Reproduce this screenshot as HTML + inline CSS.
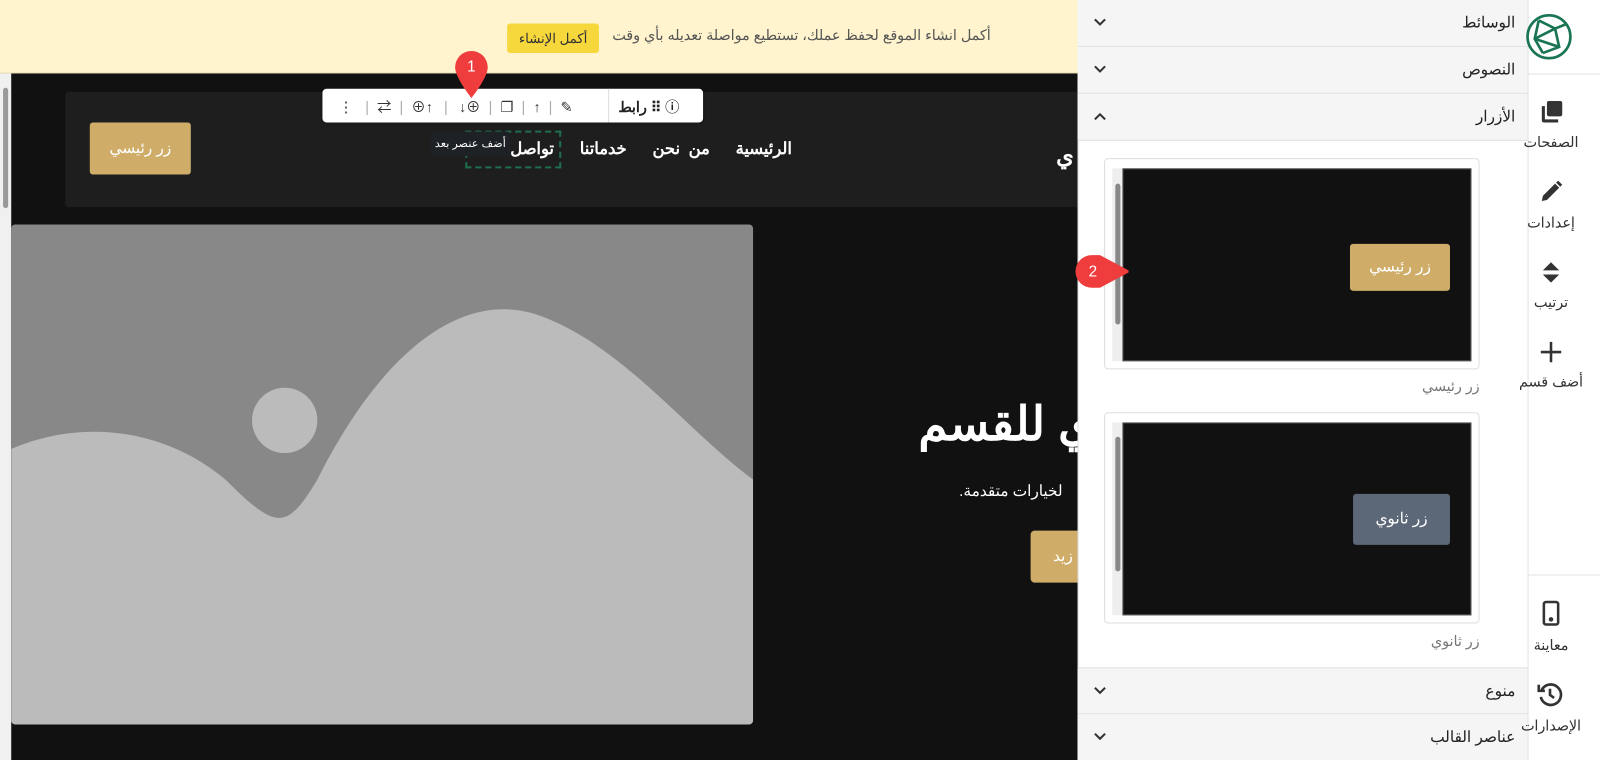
<!DOCTYPE html>
<html><head><meta charset="utf-8"><style>
*{margin:0;padding:0;box-sizing:border-box}
body{width:1600px;height:760px;overflow:hidden;background:#fff;font-family:"Liberation Sans","Noto Sans CJK SC",sans-serif;position:relative}
#w{position:absolute;left:0;top:0;width:1568px;height:745px;transform:scale(1.0204);transform-origin:0 0;overflow:hidden}
.a{position:absolute}
.ar{direction:rtl}
.row{position:absolute;left:1056px;width:441px;height:46px;background:#f5f5f5;border-bottom:1px solid #e2e2e2;font-size:15px;color:#222}
.row span{position:absolute;right:12px;top:13px}
.row svg{position:absolute;left:16px;top:18px}
.lbl{position:absolute;font-size:14px;color:#333;text-align:center;width:100px;left:1470px;direction:rtl}
</style></head><body><div id="w">
<div class="a" style="left:0;top:0;width:1056px;height:72px;background:#fff4ce;border-bottom:1px solid #eadfb5"></div>
<div class="a ar" style="left:600px;top:26px;font-size:14px;color:#555">أكمل انشاء الموقع لحفظ عملك، تستطيع مواصلة تعديله بأي وقت</div>
<div class="a ar" style="left:497px;top:23px;width:90px;height:29px;background:#f7d83c;border-radius:3px;font-size:13px;color:#333;text-align:center;line-height:29px">أكمل الإنشاء</div>
<div class="a" style="left:0;top:72px;width:1056px;height:688px;background:#111"></div>
<div class="a" style="left:0;top:72px;width:11px;height:688px;background:#f0f0f0"></div>
<div class="a" style="left:3px;top:86px;width:5px;height:118px;background:#999;border-radius:3px"></div>
<div class="a" style="left:64px;top:90px;width:992px;height:113px;background:#1e1e1e;border-radius:3px 0 0 3px"></div>
<div class="a ar" style="left:88px;top:120px;width:99px;height:51px;background:#cfad69;border-radius:3px;color:#fff;font-size:15px;text-align:center;line-height:51px">زر رئيسي</div>
<div class="a ar" style="left:500px;top:136px;font-size:16px;font-weight:bold;color:#fff;white-space:nowrap;word-spacing:4px">الرئيسية&nbsp;&nbsp;&nbsp;من نحن&nbsp;&nbsp;&nbsp;خدماتنا&nbsp;&nbsp;&nbsp;تواصل</div>
<div class="a" style="left:456px;top:128px;width:94px;height:37px;border:2px dashed #1f6f4e"></div>
<div class="a ar" style="left:422px;top:129px;width:78px;height:24px;background:#1e2227;color:#fff;font-size:11px;text-align:center;line-height:24px;border-radius:3px">أضف عنصر بعد</div>
<div class="a ar" style="left:1035px;top:140px;font-size:22px;font-weight:bold;color:#fff">ي</div>
<div class="a" style="left:316px;top:87px;width:373px;height:33px;background:#fff;border-radius:4px;box-shadow:0 1px 3px rgba(0,0,0,.3)"></div>
<div class="a" style="left:596px;top:87px;width:1px;height:33px;background:#ddd"></div>
<div class="a" style="left:332px;top:95px;font-size:14px;color:#333;white-space:nowrap">⋮ <span style="color:#aaa;margin:0 8px">|</span>⇄<span style="color:#aaa;margin:0 8px">|</span>⊕↑<span style="color:#aaa;margin:0 11px">|</span>↓⊕<span style="color:#aaa;margin:0 8px">|</span>❐<span style="color:#aaa;margin:0 8px">|</span>↑<span style="color:#aaa;margin:0 8px">|</span>✎</div>
<div class="a ar" style="left:606px;top:95px;font-size:14px;color:#222;font-weight:bold">⠿ ⓘ رابط</div>
<svg class="a" style="left:444px;top:48px" width="36" height="50"><path d="M18 2a16 16 0 0 1 16 16c0 10-16 30-16 30S2 28 2 18A16 16 0 0 1 18 2z" fill="#ef3d3d"/><text x="18" y="22" fill="#fff" font-size="15" font-family="Liberation Sans" text-anchor="middle">1</text></svg>
<div class="a" style="left:11px;top:220px;width:727px;height:490px;background:#888;border-radius:4px;overflow:hidden">
<svg width="727" height="490"><path d="M0 220 C70 190 150 200 210 250 C260 300 270 300 300 250 C360 130 440 60 520 90 C600 120 660 200 727 250 L727 490 L0 490Z" fill="#bbb"/><circle cx="268" cy="192" r="32" fill="#bbb"/></svg></div>
<div class="a ar" style="left:900px;top:388px;font-size:46px;font-weight:bold;color:#fff;white-space:nowrap">ي للقسم</div>
<div class="a ar" style="left:940px;top:472px;font-size:15px;color:#fff;white-space:nowrap">لخيارات متقدمة.</div>
<div class="a" style="left:1010px;top:520px;width:46px;height:51px;background:#cfad69;border-radius:4px 0 0 4px;color:#fff;font-size:15px;line-height:51px;padding-left:22px">زيد</div>
<div class="a" style="left:1056px;top:0;width:1px;height:760px;background:#ddd"></div>
<div class="row ar" style="top:0"><span>الوسائط</span><svg width="12" height="8"><path d="M1 1l5 5 5-5" stroke="#333" stroke-width="2" fill="none"/></svg></div>
<div class="row ar" style="top:46px"><span>النصوص</span><svg width="12" height="8"><path d="M1 1l5 5 5-5" stroke="#333" stroke-width="2" fill="none"/></svg></div>
<div class="row ar" style="top:92px"><span>الأزرار</span><svg width="12" height="8"><path d="M1 7l5-5 5 5" stroke="#333" stroke-width="2" fill="none"/></svg></div>
<div class="row ar" style="top:654px;border-top:1px solid #e2e2e2"><span>منوع</span><svg width="12" height="8"><path d="M1 1l5 5 5-5" stroke="#333" stroke-width="2" fill="none"/></svg></div>
<div class="row ar" style="top:700px;height:60px"><span>عناصر القالب</span><svg width="12" height="8"><path d="M1 1l5 5 5-5" stroke="#333" stroke-width="2" fill="none"/></svg></div>
<div class="a" style="left:1082px;top:155px;width:368px;height:207px;border:1px solid #ddd;border-radius:4px"></div>
<div class="a" style="left:1090px;top:165px;width:10px;height:189px;background:#eee"></div>
<div class="a" style="left:1093px;top:180px;width:5px;height:138px;background:#888;border-radius:3px"></div>
<div class="a" style="left:1100px;top:165px;width:342px;height:189px;background:#111;border:1px solid #555"></div>
<div class="a ar" style="left:1323px;top:239px;width:98px;height:46px;background:#cfad69;border-radius:3px;color:#fff;font-size:15px;text-align:center;line-height:46px">زر رئيسي</div>
<div class="a ar" style="left:1300px;top:370px;width:150px;font-size:14px;color:#777">زر رئيسي</div>
<div class="a" style="left:1082px;top:404px;width:368px;height:207px;border:1px solid #ddd;border-radius:4px"></div>
<div class="a" style="left:1090px;top:414px;width:10px;height:189px;background:#eee"></div>
<div class="a" style="left:1093px;top:428px;width:5px;height:132px;background:#888;border-radius:3px"></div>
<div class="a" style="left:1100px;top:414px;width:342px;height:189px;background:#111;border:1px solid #555"></div>
<div class="a ar" style="left:1326px;top:484px;width:95px;height:50px;background:#5c6778;border-radius:3px;color:#fff;font-size:15px;text-align:center;line-height:50px">زر ثانوي</div>
<div class="a ar" style="left:1300px;top:620px;width:150px;font-size:14px;color:#777">زر ثانوي</div>
<svg class="a" style="left:1052px;top:248px" width="54" height="36"><path d="M18 2h8l30 16-30 16h-8a16 16 0 0 1 0-32z" fill="#ef3d3d"/><text x="19" y="23" fill="#fff" font-size="15" font-family="Liberation Sans" text-anchor="middle">2</text></svg>
<div class="a" style="left:1497px;top:0;width:1px;height:760px;background:#e2e2e2"></div>
<div class="a" style="left:1497px;top:72px;width:103px;height:1px;background:#e2e2e2"></div>
<div class="a" style="left:1497px;top:563px;width:103px;height:1px;background:#e2e2e2"></div>
<svg class="a" style="left:1494px;top:12px" width="48" height="48" fill="none" stroke="#1a7553" stroke-width="2.6"><circle cx="24" cy="24" r="21"/><path d="M14 8L30 16 40 12M30 16L34 34 18 40M14 8L10 26 18 40M10 26L34 34M30 16L10 26"/></svg>
<svg class="a" style="left:1508px;top:98px" width="24" height="24" fill="#333"><rect x="8" y="1" width="15" height="15" rx="2"/><path d="M3 6v14a2 2 0 0 0 2 2h14v-3H6V6z"/></svg>
<div class="lbl" style="top:131px">الصفحات</div>
<svg class="a" style="left:1508px;top:176px" width="24" height="24" fill="#333"><path d="M3 21l1-5L16 4l4 4L8 20z M17 3l2-2 4 4-2 2z"/></svg>
<div class="lbl" style="top:210px">إعدادات</div>
<svg class="a" style="left:1510px;top:256px" width="20" height="22" fill="#333"><path d="M10 1l8 8H2zM10 21l8-8H2z"/></svg>
<div class="lbl" style="top:288px">ترتيب</div>
<svg class="a" style="left:1509px;top:334px" width="22" height="22" stroke="#333" stroke-width="2.5"><path d="M11 1v20M1 11h20"/></svg>
<div class="lbl" style="top:366px">أضف قسم</div>
<svg class="a" style="left:1509px;top:588px" width="22" height="26" fill="none" stroke="#333" stroke-width="2.5"><rect x="4" y="2" width="14" height="22" rx="2"/><circle cx="11" cy="19" r="1" fill="#333"/></svg>
<div class="lbl" style="top:624px">معاينة</div>
<svg class="a" style="left:1506px;top:667px" width="26" height="26" fill="none" stroke="#333" stroke-width="2.6"><path d="M5 9A10 10 0 1 1 4 16"/><path d="M2 4v6h6" /><path d="M13 8v6l4 3"/></svg>
<div class="lbl" style="top:703px">الإصدارات</div>
</div></body></html>
